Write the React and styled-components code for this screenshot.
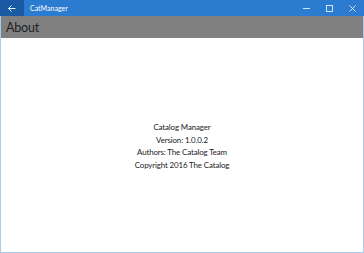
import styled, { createGlobalStyle } from 'styled-components';

const GlobalStyle = createGlobalStyle`
  html, body {
    margin: 0;
    padding: 0;
    width: 364px;
    height: 253px;
    overflow: hidden;
    background: #ffffff;
  }
`;

const Window = styled.div`
  box-sizing: border-box;
  width: 364px;
  height: 253px;
  display: flex;
  flex-direction: column;
  border: 1px solid #a9cdea;
  border-top: none;
  font-family: Lato, 'Noto Sans', sans-serif;
  background: #ffffff;
`;

const TitleBar = styled.div`
  display: flex;
  align-items: center;
  height: 16px;
  margin: 0 -1px;
  background: #2b7bd1;
  color: #ffffff;
`;

const BackButton = styled.div`
  width: 24px;
  height: 16px;
  display: flex;
  align-items: center;
  justify-content: center;
  background: #1a5aa5;
`;

const AppName = styled.span`
  font-size: 7px;
  margin-left: 6px;
  flex: 1;
`;

const Caption = styled.div`
  width: 23px;
  height: 16px;
  display: flex;
  align-items: center;
  justify-content: center;
`;

const Header = styled.div`
  height: 22px;
  background: #808080;
  display: flex;
  align-items: center;
  padding-left: 5px;
`;

const PageTitle = styled.h1`
  margin: 0;
  font-size: 12.5px;
  font-weight: 400;
  letter-spacing: -0.2px;
  color: #1e1e1e;
`;

const Content = styled.div`
  flex: 1;
  display: flex;
  flex-direction: column;
  align-items: center;
  justify-content: center;
  padding-top: 2px;
`;

const Line = styled.div`
  font-size: 7.9px;
  line-height: 12.5px;
  letter-spacing: -0.12px;
  color: #1a1a1a;
`;

const App = () => (
  <>
    <GlobalStyle />
    <Window>
      <TitleBar>
        <BackButton>
          <svg width="8" height="7" viewBox="0 0 8 7">
            <path d="M0.5 3.5H7.5M3.5 0.5L0.5 3.5L3.5 6.5" stroke="#fff" strokeWidth="0.9" fill="none" />
          </svg>
        </BackButton>
        <AppName>CatManager</AppName>
        <Caption>
          <svg width="7" height="7" viewBox="0 0 7 7">
            <path d="M0 3.5H7" stroke="#fff" strokeWidth="0.8" />
          </svg>
        </Caption>
        <Caption>
          <svg width="7" height="7" viewBox="0 0 7 7">
            <rect x="0.5" y="0.5" width="6" height="6" stroke="#fff" strokeWidth="0.8" fill="none" />
          </svg>
        </Caption>
        <Caption>
          <svg width="7" height="7" viewBox="0 0 7 7">
            <path d="M0.5 0.5L6.5 6.5M6.5 0.5L0.5 6.5" stroke="#fff" strokeWidth="0.8" />
          </svg>
        </Caption>
      </TitleBar>
      <Header>
        <PageTitle>About</PageTitle>
      </Header>
      <Content>
        <Line>Catalog Manager</Line>
        <Line>Version: 1.0.0.2</Line>
        <Line>Authors: The Catalog Team</Line>
        <Line>Copyright 2016 The Catalog</Line>
      </Content>
    </Window>
  </>
);

export default App;
